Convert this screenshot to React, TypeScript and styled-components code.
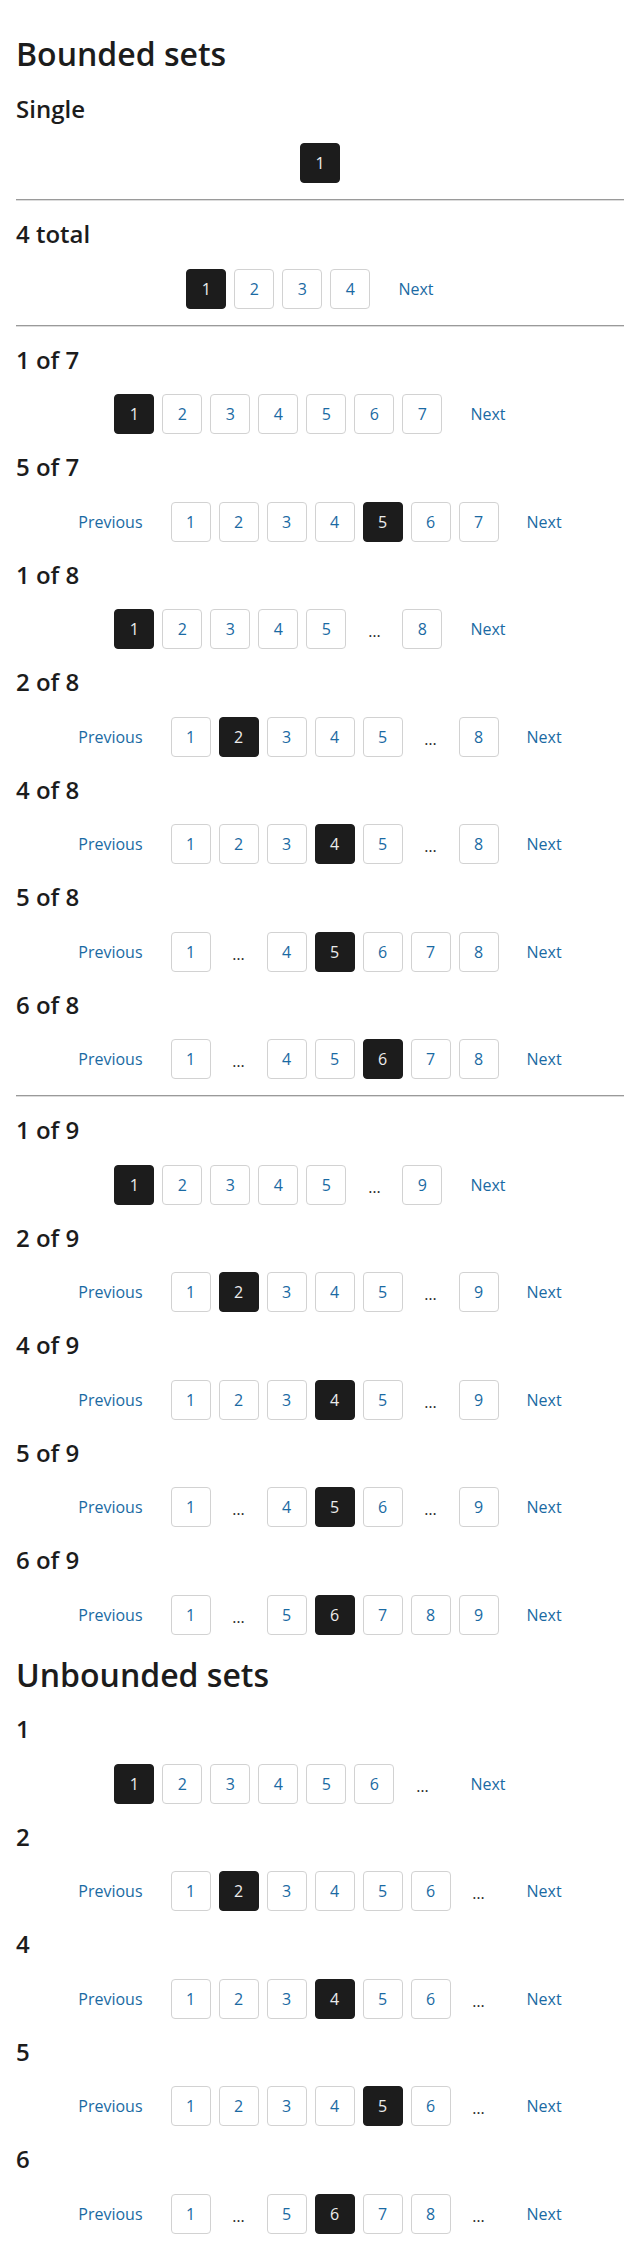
import React from "react";
import styled, { createGlobalStyle } from "styled-components";

const GlobalStyle = createGlobalStyle`
  html, body {
    margin: 0;
    padding: 0;
    background: #ffffff;
  }
  body {
    font-family: "Open Sans", "Noto Sans", "Liberation Sans", sans-serif;
    color: #1c1c1c;
  }
`;

const Page = styled.main`
  display: flow-root;
  padding: 14px 16px 16px;
`;

const Title = styled.h1`
  font-size: 32px;
  font-weight: 600;
  line-height: 43.5px;
  margin: 18px 0 17px;
  color: #1c1c1c;
`;

const Label = styled.h2`
  font-size: 24px;
  font-weight: 600;
  line-height: 32.5px;
  margin: 17px 0 18px;
  color: #1c1c1c;
`;

const Rule = styled.hr`
  margin: 0;
  height: 0;
  border: 0;
  border-top: 1px solid #9a9a9a;
  border-bottom: 1px solid #dcdcdc;
`;

const Pager = styled.ul`
  list-style: none;
  margin: 0 0 16px;
  padding: 0;
  display: flex;
  justify-content: center;
  align-items: center;
  gap: 8px;
  font-size: 16px;
`;

const PageBox = styled.li<{ $active?: boolean }>`
  box-sizing: border-box;
  width: 40px;
  height: 40px;
  display: flex;
  align-items: center;
  justify-content: center;
  border: 1px solid ${(p) => (p.$active ? "#1c1c1c" : "#d2d2d2")};
  border-radius: 4px;
  background: ${(p) => (p.$active ? "#1c1c1c" : "#ffffff")};
  color: ${(p) => (p.$active ? "#ececec" : "#1a6aa3")};
`;

const StepLink = styled.li`
  box-sizing: border-box;
  height: 40px;
  padding: 0 20px;
  display: flex;
  align-items: center;
  justify-content: center;
  color: #1a6aa3;
`;

const Gap = styled.li`
  width: 40px;
  height: 40px;
  display: flex;
  align-items: center;
  justify-content: center;
  color: #2a2a2a;
  padding-top: 4px;
  box-sizing: border-box;
`;

type Item = number | "…";

type SetDef = {
  label: string;
  current: number;
  items: Item[];
  prev?: boolean;
  next?: boolean;
  ruleAfter?: boolean;
};

const bounded: SetDef[] = [
  { label: "Single", current: 1, items: [1], ruleAfter: true },
  { label: "4 total", current: 1, items: [1, 2, 3, 4], next: true, ruleAfter: true },
  { label: "1 of 7", current: 1, items: [1, 2, 3, 4, 5, 6, 7], next: true },
  { label: "5 of 7", current: 5, items: [1, 2, 3, 4, 5, 6, 7], prev: true, next: true },
  { label: "1 of 8", current: 1, items: [1, 2, 3, 4, 5, "…", 8], next: true },
  { label: "2 of 8", current: 2, items: [1, 2, 3, 4, 5, "…", 8], prev: true, next: true },
  { label: "4 of 8", current: 4, items: [1, 2, 3, 4, 5, "…", 8], prev: true, next: true },
  { label: "5 of 8", current: 5, items: [1, "…", 4, 5, 6, 7, 8], prev: true, next: true },
  { label: "6 of 8", current: 6, items: [1, "…", 4, 5, 6, 7, 8], prev: true, next: true, ruleAfter: true },
  { label: "1 of 9", current: 1, items: [1, 2, 3, 4, 5, "…", 9], next: true },
  { label: "2 of 9", current: 2, items: [1, 2, 3, 4, 5, "…", 9], prev: true, next: true },
  { label: "4 of 9", current: 4, items: [1, 2, 3, 4, 5, "…", 9], prev: true, next: true },
  { label: "5 of 9", current: 5, items: [1, "…", 4, 5, 6, "…", 9], prev: true, next: true },
  { label: "6 of 9", current: 6, items: [1, "…", 5, 6, 7, 8, 9], prev: true, next: true },
];

const unbounded: SetDef[] = [
  { label: "1", current: 1, items: [1, 2, 3, 4, 5, 6, "…"], next: true },
  { label: "2", current: 2, items: [1, 2, 3, 4, 5, 6, "…"], prev: true, next: true },
  { label: "4", current: 4, items: [1, 2, 3, 4, 5, 6, "…"], prev: true, next: true },
  { label: "5", current: 5, items: [1, 2, 3, 4, 5, 6, "…"], prev: true, next: true },
  { label: "6", current: 6, items: [1, "…", 5, 6, 7, 8, "…"], prev: true, next: true },
];

function Pagination({ def }: { def: SetDef }) {
  return (
    <Pager>
      {def.prev && <StepLink>Previous</StepLink>}
      {def.items.map((it, i) =>
        it === "…" ? (
          <Gap key={i}>…</Gap>
        ) : (
          <PageBox key={i} $active={it === def.current}>
            {it}
          </PageBox>
        )
      )}
      {def.next && <StepLink>Next</StepLink>}
    </Pager>
  );
}

function SetList({ sets }: { sets: SetDef[] }) {
  return (
    <>
      {sets.map((s) => (
        <React.Fragment key={s.label}>
          <Label>{s.label}</Label>
          <Pagination def={s} />
          {s.ruleAfter && <Rule />}
        </React.Fragment>
      ))}
    </>
  );
}

export default function App() {
  return (
    <>
      <GlobalStyle />
      <Page>
        <Title>Bounded sets</Title>
        <SetList sets={bounded} />
        <Title>Unbounded sets</Title>
        <SetList sets={unbounded} />
      </Page>
    </>
  );
}
